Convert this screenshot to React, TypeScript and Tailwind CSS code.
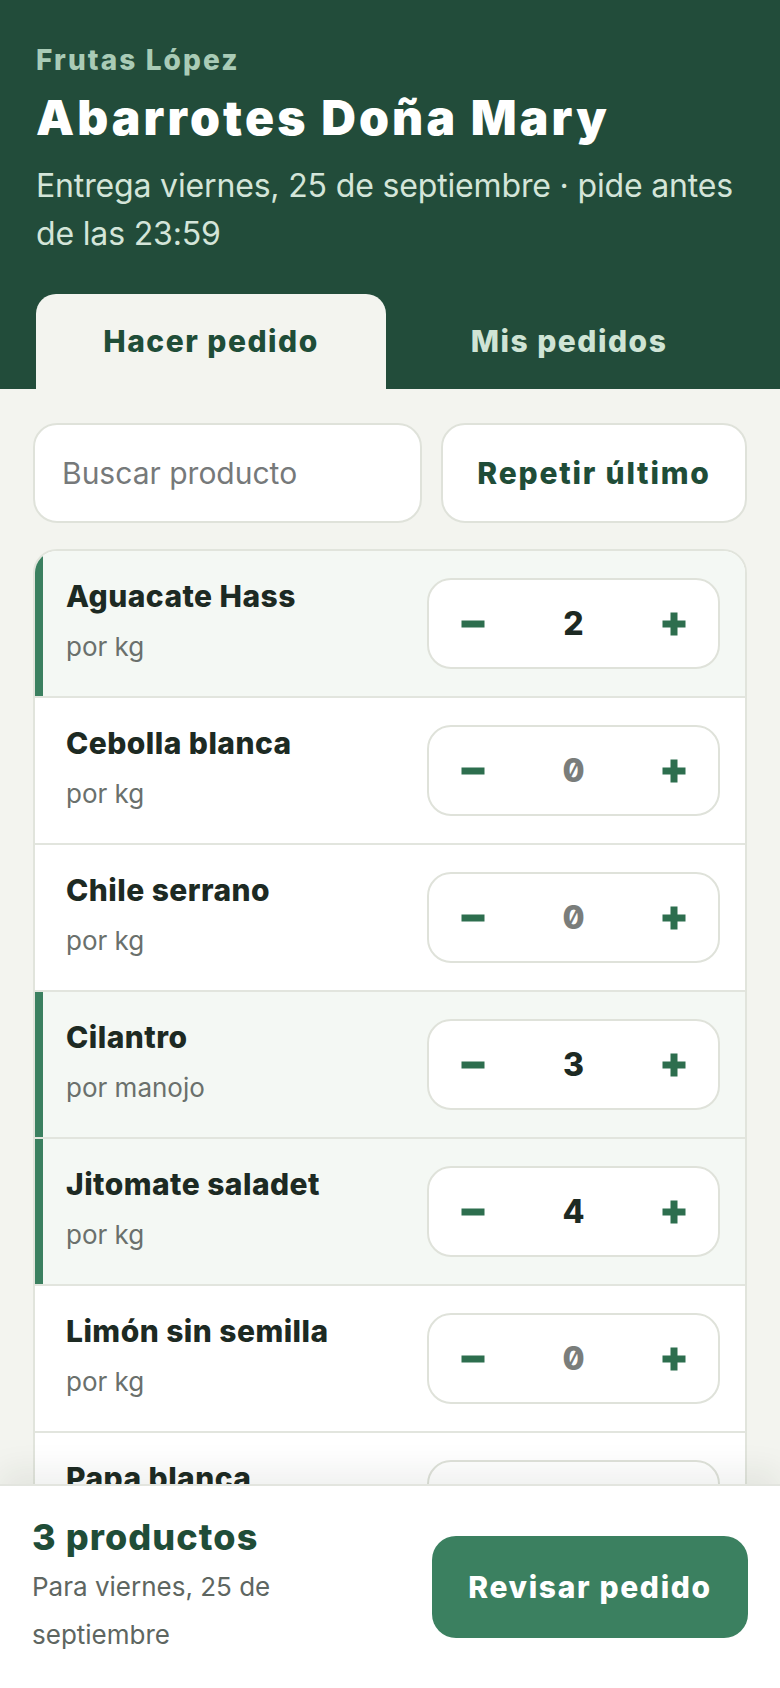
import React from 'react'

interface Product {
  name: string
  unit: string
  qty: number
}

const products: Product[] = [
  { name: 'Aguacate Hass', unit: 'por kg', qty: 2 },
  { name: 'Cebolla blanca', unit: 'por kg', qty: 0 },
  { name: 'Chile serrano', unit: 'por kg', qty: 0 },
  { name: 'Cilantro', unit: 'por manojo', qty: 3 },
  { name: 'Jitomate saladet', unit: 'por kg', qty: 4 },
  { name: 'Limón sin semilla', unit: 'por kg', qty: 0 },
  { name: 'Papa blanca', unit: 'por kg', qty: 0 },
  { name: 'Plátano macho', unit: 'por kg', qty: 0 },
]

function MinusIcon() {
  return (
    <svg width="24" height="24" viewBox="0 0 24 24" aria-hidden>
      <rect x="0.5" y="8.5" width="23" height="7" fill="#2d6e4e" />
    </svg>
  )
}

function PlusIcon() {
  return (
    <svg width="24" height="24" viewBox="0 0 24 24" aria-hidden>
      <rect x="0.5" y="8.5" width="23" height="7" fill="#2d6e4e" />
      <rect x="8.5" y="0.5" width="7" height="23" fill="#2d6e4e" />
    </svg>
  )
}

function Stepper({ qty }: { qty: number }) {
  return (
    <div className="flex h-[91px] w-[293px] shrink-0 items-center rounded-[24px] border-2 border-[#dfe2da] bg-white">
      <button className="flex h-full w-[88px] items-center justify-center">
        <MinusIcon />
      </button>
      <div
        className={
          'flex-1 text-center text-[32px] font-extrabold slashed-zero ' +
          (qty > 0 ? 'text-[#1d2a23]' : 'text-[#7a7d7b]')
        }
      >
        {qty}
      </div>
      <button className="flex h-full w-[88px] items-center justify-center">
        <PlusIcon />
      </button>
    </div>
  )
}

function ProductRow({ p }: { p: Product }) {
  const active = p.qty > 0
  return (
    <div
      className={
        'flex items-center justify-between border-b-2 border-[#e2e5de] py-[27px] pl-[31px] pr-[25px] ' +
        (active ? 'bg-[#f4f8f4] shadow-[inset_8px_0_0_#3b8060]' : 'bg-white')
      }
    >
      <div className="h-[91px]">
        <div className="text-[30px] font-extrabold leading-[36px] tracking-[0.015em] text-[#1d2a23]">
          {p.name}
        </div>
        <div className="mt-[18px] text-[26px] leading-[30px] text-[#6a706c]">{p.unit}</div>
      </div>
      <Stepper qty={p.qty} />
    </div>
  )
}

export default function App() {
  const count = products.filter((p) => p.qty > 0).length

  return (
    <div className="flex h-screen flex-col overflow-hidden bg-[#f3f4ef] font-['Inter',sans-serif]">
      <header className="shrink-0 bg-[#224c3a] px-[36px] pt-[42px]">
        <p className="text-[28px] font-extrabold leading-[36px] tracking-[0.075em] text-[#a9cbb6]">
          Frutas López
        </p>
        <h1 className="mt-[12px] text-[48px] font-black leading-[56px] tracking-[0.065em] text-white">
          Abarrotes Doña Mary
        </h1>
        <p className="mt-[16px] text-[32px] leading-[48px] tracking-[-0.005em] text-[#d4e5d9]">
          Entrega viernes, 25 de septiembre · pide antes de las 23:59
        </p>
        <div className="mt-[36px] flex gap-[8px]">
          <button className="h-[95px] flex-1 rounded-t-[20px] bg-[#f3f4ef] text-[30px] font-extrabold tracking-[0.05em] text-[#1f4d38]">
            Hacer pedido
          </button>
          <button className="h-[95px] flex-1 text-[30px] font-extrabold tracking-[0.05em] text-[#cfe4d5]">
            Mis pedidos
          </button>
        </div>
      </header>

      <main className="min-h-0 flex-1 overflow-hidden px-[33px] pt-[34px]">
        <div className="flex gap-[19px]">
          <div className="flex h-[100px] flex-1 items-center rounded-[24px] border-2 border-[#dfe2da] bg-white px-[27px] text-[30px] text-[#76797a]">
            Buscar producto
          </div>
          <button className="h-[100px] w-[306px] rounded-[24px] border-2 border-[#dfe2da] bg-white text-[30px] font-extrabold tracking-[0.06em] text-[#1f4d38]">
            Repetir último
          </button>
        </div>

        <div className="mt-[26px] overflow-hidden rounded-[24px] border-2 border-[#e1e4dc] bg-white">
          {products.map((p) => (
            <ProductRow key={p.name} p={p} />
          ))}
        </div>
      </main>

      <footer className="relative z-10 flex h-[204px] shrink-0 items-center justify-between border-t-2 border-[#e3e5df] bg-white px-[32px] shadow-[0_-14px_30px_rgba(30,40,30,0.07)]">
        <div className="max-w-[290px]">
          <div className="text-[36px] font-extrabold leading-[44px] tracking-[0.03em] text-[#1f4d38]">
            {count} productos
          </div>
          <div className="mt-[4px] text-[26px] leading-[48px] text-[#5e6661]">
            Para viernes, 25 de septiembre
          </div>
        </div>
        <button className="h-[102px] w-[316px] rounded-[24px] bg-[#3b8060] text-[30px] font-extrabold tracking-[0.055em] text-white">
          Revisar pedido
        </button>
      </footer>
    </div>
  )
}
